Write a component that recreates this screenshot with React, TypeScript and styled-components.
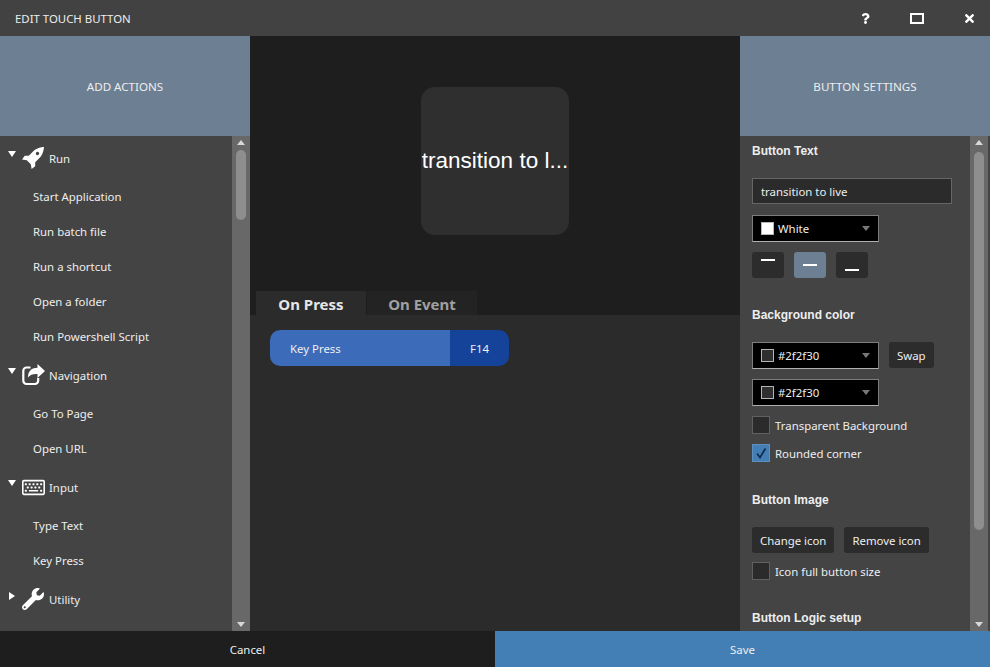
import React from 'react';
import styled, {createGlobalStyle} from 'styled-components';
import {FaRegKeyboard, FaWrench, FaQuestion, FaTimes} from 'react-icons/fa';

const UI_FONT = `"Noto Sans", "Open Sans", sans-serif`;
const HEAD_FONT = `"Liberation Sans", Arial, sans-serif`;

const GlobalStyle = createGlobalStyle`
  html, body {
    margin: 0;
    padding: 0;
    background: #2b2b2b;
  }
`;

function RocketIcon() {
  return (
    <svg width='22' height='22' viewBox='0 0 22 22'>
      <path
        fill='#ffffff'
        fillRule='evenodd'
        d='M22 0C22 0 15.5 .4 12 3.6L6.8 8.8H2.8L0 12.4L4.8 13.2L8.8 17.2L9.6 22L13.2 19.2V15.2L18.4 10C21.6 6.5 22 0 22 0ZM15.5 4.8A1.7 1.7 0 1 1 15.49 4.8Z'
      />
    </svg>
  );
}

function ShareIcon() {
  return (
    <svg width='23' height='22' viewBox='0 0 23 22'>
      <path
        fill='none'
        stroke='#ffffff'
        strokeWidth='2.2'
        d='M8.5 3.5H4.5A3.2 3.2 0 0 0 1.3 6.7V16.8A3.2 3.2 0 0 0 4.5 20H13A3.2 3.2 0 0 0 16.2 16.8V14'
      />
      <path
        fill='#ffffff'
        d='M23 7L15.5 0V3.8C10 3.8 6 6.8 6 13.5C8 10.8 11 9.8 15.5 10V14Z'
      />
    </svg>
  );
}

const groups = [
  {name: 'Run', icon: <RocketIcon/>, open: true, items: ['Start Application', 'Run batch file', 'Run a shortcut', 'Open a folder', 'Run Powershell Script']},
  {name: 'Navigation', icon: <ShareIcon/>, open: true, items: ['Go To Page', 'Open URL']},
  {name: 'Input', icon: <FaRegKeyboard size={23}/>, open: true, items: ['Type Text', 'Key Press']},
  {name: 'Utility', icon: <FaWrench size={22}/>, open: false, items: []},
];

function Scroll(props: {thumbHeight: number; thumbTop: number}) {
  return (
    <ScrollTrack>
      <ScrollArrow $dir='up'/>
      <ScrollThumb style={{height: props.thumbHeight, marginTop: props.thumbTop}}/>
      <ScrollSpacer/>
      <ScrollArrow $dir='down'/>
    </ScrollTrack>
  );
}

function ColorSelect(props: {label: string; color: string}) {
  return (
    <Select>
      <Swatch $color={props.color}/>
      <SelectLabel>{props.label}</SelectLabel>
      <SelectArrow/>
    </Select>
  );
}

function Check(props: {label: string; checked?: boolean}) {
  return (
    <CheckRow>
      <CheckBox $checked={props.checked}>
        {props.checked && (
          <svg width='14' height='14' viewBox='0 0 14 14'>
            <path d='M3 7.5L6 11.5L11.5 2.5' fill='none' stroke='#12294a' strokeWidth='1.7'/>
          </svg>
        )}
      </CheckBox>
      <span>{props.label}</span>
    </CheckRow>
  );
}

export default function App() {
  return (
    <Root>
      <GlobalStyle/>
      <TitleBar>
        <Title>EDIT TOUCH BUTTON</Title>
        <TitleIcons>
          <TitleIcon><FaQuestion size={11}/></TitleIcon>
          <TitleIcon><MaxBox/></TitleIcon>
          <TitleIcon><FaTimes size={13}/></TitleIcon>
        </TitleIcons>
      </TitleBar>

      <Main>
        <SideColumn>
          <SideHeader>ADD ACTIONS</SideHeader>
          <SideBody>
            <ActionList>
              {groups.map(g => (
                <React.Fragment key={g.name}>
                  <GroupRow>
                    <Caret $open={g.open}/>
                    <GroupIcon>{g.icon}</GroupIcon>
                    <span>{g.name}</span>
                  </GroupRow>
                  {g.items.map(item => <ActionItem key={item}>{item}</ActionItem>)}
                </React.Fragment>
              ))}
            </ActionList>
            <Scroll thumbHeight={70} thumbTop={5}/>
          </SideBody>
        </SideColumn>

        <Center>
          <Preview>
            <PreviewButton>transition to l...</PreviewButton>
            <Tabs>
              <Tab $active>On Press</Tab>
              <Tab>On Event</Tab>
            </Tabs>
          </Preview>
          <Actions>
            <ActionPill>
              <PillName>Key Press</PillName>
              <PillValue>F14</PillValue>
            </ActionPill>
          </Actions>
        </Center>

        <SideColumn>
          <SideHeader>BUTTON SETTINGS</SideHeader>
          <SideBody $padRight={2}>
            <Settings>
              <SectionTitle>Button Text</SectionTitle>
              <TextField defaultValue='transition to live'/>
              <ColorSelect label='White' color='#ffffff'/>
              <AlignRow>
                <AlignButton $line='top'/>
                <AlignButton $line='middle' $active/>
                <AlignButton $line='bottom'/>
              </AlignRow>

              <SectionTitle $top={29}>Background color</SectionTitle>
              <SelectRow>
                <ColorSelect label='#2f2f30' color='#2f2f30'/>
                <DarkButton>Swap</DarkButton>
              </SelectRow>
              <ColorSelect label='#2f2f30' color='#2f2f30'/>
              <Check label='Transparent Background'/>
              <Check label='Rounded corner' checked/>

              <SectionTitle $top={20}>Button Image</SectionTitle>
              <ButtonRow>
                <DarkButton>Change icon</DarkButton>
                <DarkButton>Remove icon</DarkButton>
              </ButtonRow>
              <Check label='Icon full button size'/>

              <SectionTitle $top={20}>Button Logic setup</SectionTitle>
            </Settings>
            <Scroll thumbHeight={378} thumbTop={7}/>
          </SideBody>
        </SideColumn>
      </Main>

      <Footer>
        <CancelButton>Cancel</CancelButton>
        <SaveButton>Save</SaveButton>
      </Footer>
    </Root>
  );
}

const Root = styled.div`
  width: 990px;
  height: 667px;
  display: flex;
  flex-direction: column;
  overflow: hidden;
  background: #444444;
  color: #eeeeee;
  font-family: ${UI_FONT};
  font-size: 11.4px;
`;

const TitleBar = styled.div`
  height: 36px;
  flex: none;
  display: flex;
  align-items: center;
  justify-content: space-between;
  background: #424242;
  padding-left: 15px;
`;

const Title = styled.div`
  font-size: 11.4px;
`;

const TitleIcons = styled.div`
  display: flex;
  align-items: center;
  gap: 10px;
`;

const TitleIcon = styled.div`
  width: 42px;
  display: flex;
  align-items: center;
  justify-content: center;
  color: #ffffff;
`;

const MaxBox = styled.div`
  width: 10px;
  height: 7px;
  border: 2px solid #ffffff;
`;

const Main = styled.div`
  flex: 1;
  min-height: 0;
  display: flex;
`;

const SideColumn = styled.div`
  width: 250px;
  flex: none;
  display: flex;
  flex-direction: column;
  background: #444444;
`;

const SideHeader = styled.div`
  height: 100px;
  flex: none;
  display: flex;
  align-items: center;
  justify-content: center;
  background: #6d7f93;
  font-size: 11.6px;
`;

const SideBody = styled.div<{$padRight?: number}>`
  flex: 1;
  min-height: 0;
  display: flex;
  padding-right: ${p => p.$padRight || 0}px;
`;

const ActionList = styled.div`
  flex: 1;
  padding-top: 1px;
  overflow: hidden;
`;

const GroupRow = styled.div`
  height: 42px;
  display: flex;
  align-items: center;
  position: relative;
  padding-left: 22px;
`;

const Caret = styled.div<{$open: boolean}>`
  position: absolute;
  width: 0;
  height: 0;
  ${p => p.$open ? `
    left: 8px;
    top: 14px;
    border-left: 4px solid transparent;
    border-right: 4px solid transparent;
    border-top: 6px solid #ffffff;
  ` : `
    left: 9px;
    top: 14px;
    border-top: 4px solid transparent;
    border-bottom: 4px solid transparent;
    border-left: 6px solid #ffffff;
  `}
`;

const GroupIcon = styled.div`
  width: 27px;
  display: flex;
  color: #ffffff;
`;

const ActionItem = styled.div`
  height: 35px;
  display: flex;
  align-items: center;
  padding-left: 33px;
`;

const ScrollTrack = styled.div`
  width: 18px;
  flex: none;
  display: flex;
  flex-direction: column;
  align-items: center;
  background: #686868;
`;

const ScrollArrow = styled.div<{$dir: 'up' | 'down'}>`
  flex: none;
  width: 0;
  height: 0;
  border-left: 4px solid transparent;
  border-right: 4px solid transparent;
  ${p => p.$dir === 'up'
    ? 'border-bottom: 5px solid #d8d8d8; margin-top: 4px;'
    : 'border-top: 5px solid #d8d8d8; margin-bottom: 4px;'}
`;

const ScrollThumb = styled.div`
  width: 10px;
  flex: none;
  border-radius: 5px;
  background: #8e8e8e;
`;

const ScrollSpacer = styled.div`
  flex: 1;
`;

const Center = styled.div`
  flex: 1;
  display: flex;
  flex-direction: column;
  background: #2b2b2b;
`;

const Preview = styled.div`
  height: 279px;
  flex: none;
  display: flex;
  flex-direction: column;
  align-items: center;
  justify-content: flex-end;
  background: #1e1e1e;
`;

const PreviewButton = styled.div`
  width: 148px;
  height: 148px;
  margin-bottom: 56px;
  display: flex;
  align-items: center;
  justify-content: center;
  border-radius: 14px;
  background: #2f2f30;
  color: #ffffff;
  font-family: ${HEAD_FONT};
  font-size: 22.5px;
  white-space: nowrap;
`;

const Tabs = styled.div`
  align-self: stretch;
  display: flex;
  gap: 1px;
  padding-left: 6px;
`;

const Tab = styled.div<{$active?: boolean}>`
  width: 110px;
  height: 24px;
  padding-top: 2px;
  box-sizing: border-box;
  display: flex;
  align-items: center;
  justify-content: center;
  background: ${p => p.$active ? '#2b2b2b' : '#232323'};
  color: ${p => p.$active ? '#e6e6e6' : '#a0a0a0'};
  font-size: 15px;
  font-weight: 700;
`;

const Actions = styled.div`
  flex: 1;
  padding: 15px 0 0 20px;
`;

const ActionPill = styled.div`
  width: 239px;
  height: 36px;
  display: flex;
  border-radius: 10px;
  overflow: hidden;
`;

const PillName = styled.div`
  width: 180px;
  display: flex;
  align-items: center;
  padding-left: 20px;
  box-sizing: border-box;
  background: #3c6bba;
`;

const PillValue = styled.div`
  flex: 1;
  display: flex;
  align-items: center;
  padding-left: 20px;
  background: #15439a;
`;

const Settings = styled.div`
  flex: 1;
  padding: 7px 0 0 12px;
  display: flex;
  flex-direction: column;
  align-items: flex-start;
  overflow: hidden;
`;

const SectionTitle = styled.div<{$top?: number}>`
  height: 16px;
  line-height: 16px;
  flex: none;
  margin-top: ${p => p.$top || 0}px;
  margin-bottom: 19px;
  font-family: ${HEAD_FONT};
  font-size: 12px;
  font-weight: 700;
`;

const TextField = styled.input`
  width: 200px;
  height: 26px;
  flex: none;
  box-sizing: border-box;
  padding: 0 8px;
  margin-bottom: 11px;
  border: 1px solid #666666;
  outline: none;
  background: #2b2b2b;
  color: #eeeeee;
  font-family: ${UI_FONT};
  font-size: 11.4px;
`;

const Select = styled.div`
  width: 127px;
  height: 27px;
  flex: none;
  box-sizing: border-box;
  display: flex;
  align-items: center;
  padding: 0 8px;
  margin-bottom: 10px;
  background: #000000;
  border: 1px solid #7d7d7d;
  border-bottom-color: #b0b0b0;
`;

const Swatch = styled.div<{$color: string}>`
  width: 13px;
  height: 13px;
  flex: none;
  box-sizing: border-box;
  border: 1px solid #b5b5b5;
  background: ${p => p.$color};
`;

const SelectLabel = styled.div`
  flex: 1;
  margin-left: 4px;
`;

const SelectArrow = styled.div`
  width: 0;
  height: 0;
  border-left: 4px solid transparent;
  border-right: 4px solid transparent;
  border-top: 5px solid #777777;
`;

const AlignRow = styled.div`
  display: flex;
  gap: 10px;
`;

const AlignButton = styled.div<{$line: 'top' | 'middle' | 'bottom'; $active?: boolean}>`
  width: 32px;
  height: 26px;
  display: flex;
  justify-content: center;
  align-items: ${p => p.$line === 'top' ? 'flex-start' : 'center'};
  border-radius: 3px;
  background: ${p => p.$active ? '#6d7f93' : '#2c2c2c'};

  &::after {
    content: '';
    width: 14px;
    height: 2px;
    background: #ffffff;
    margin-top: ${p => p.$line === 'top' ? '7px' : p.$line === 'bottom' ? '9px' : '0'};
  }
`;

const SelectRow = styled.div`
  display: flex;
  align-items: flex-start;
  gap: 10px;
`;

const DarkButton = styled.div`
  height: 26px;
  padding: 0 8px;
  display: flex;
  align-items: center;
  border-radius: 3px;
  background: #2c2c2c;
`;

const CheckRow = styled.div`
  height: 18px;
  flex: none;
  display: flex;
  align-items: center;
  gap: 5px;
  margin-bottom: 10px;
`;

const CheckBox = styled.div<{$checked?: boolean}>`
  width: 18px;
  height: 18px;
  flex: none;
  box-sizing: border-box;
  display: flex;
  align-items: center;
  justify-content: center;
  border: 1px solid ${p => p.$checked ? '#5f8fbf' : '#606060'};
  background: ${p => p.$checked ? '#437fb5' : '#2b2b2b'};
`;

const ButtonRow = styled.div`
  display: flex;
  gap: 10px;
  margin-bottom: 9px;
`;

const Footer = styled.div`
  height: 36px;
  flex: none;
  display: flex;
`;

const CancelButton = styled.div`
  width: 495px;
  display: flex;
  align-items: center;
  justify-content: center;
  background: #1e1e1e;
`;

const SaveButton = styled.div`
  flex: 1;
  display: flex;
  align-items: center;
  justify-content: center;
  background: #437fb5;
`;
